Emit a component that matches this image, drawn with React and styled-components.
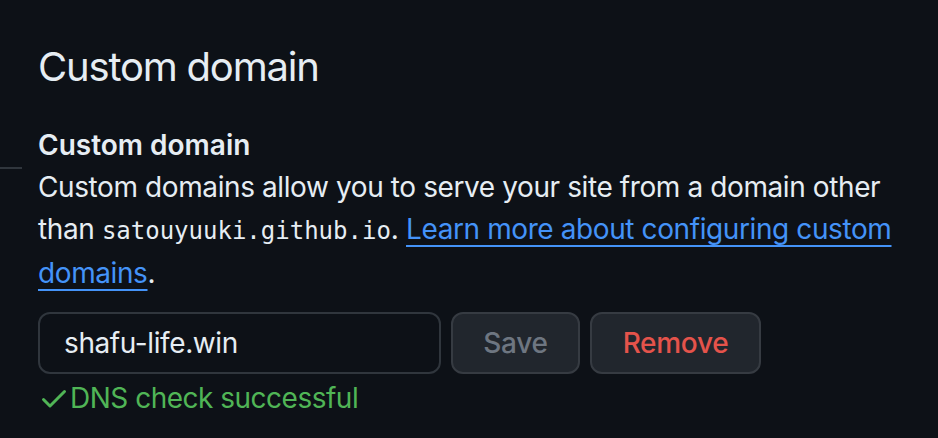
import React from 'react';
import styled, { createGlobalStyle } from 'styled-components';

const GlobalStyle = createGlobalStyle`
	html, body {
		margin: 0;
		padding: 0;
		background: #0d1117;
	}
	body {
		font-family: Inter, "Noto Sans", "Liberation Sans", sans-serif;
		color: #e6edf3;
	}
`;

const Page = styled.div`
	display: flex;
	width: 938px;
	height: 438px;
	background: #0d1117;
	overflow: hidden;
`;

const Sidebar = styled.aside`
	width: 22px;
	flex-shrink: 0;
	padding-top: 167px;
`;

const SideRule = styled.div`
	height: 2px;
	background: #30363d;
`;

const Main = styled.main`
	flex: 1;
	padding: 37px 0 0 16px;
`;

const Heading = styled.h2`
	margin: 0 0 27px;
	font-size: 40px;
	font-weight: 400;
	line-height: 60px;
	letter-spacing: -1.2px;
`;

const Label = styled.h3`
	margin: 0;
	font-size: 28px;
	font-weight: 600;
	line-height: 42px;
`;

const Description = styled.p`
	margin: 0;
	width: 880px;
	font-size: 28px;
	line-height: 42px;
	letter-spacing: -0.4px;
`;

const Code = styled.code`
	font-family: "DejaVu Sans Mono", "Liberation Mono", monospace;
	font-size: 24px;
	letter-spacing: 0;
`;

const Link = styled.a`
	color: #4493f8;
	text-decoration: underline;
	text-decoration-thickness: 2px;
	text-underline-offset: 6px;
`;

const Form = styled.div`
	display: flex;
	gap: 10px;
	margin-top: 18px;
`;

const Input = styled.input`
	box-sizing: border-box;
	width: 403px;
	height: 62px;
	padding: 0 24px;
	background: #0d1117;
	border: 2px solid #30363d;
	border-radius: 12px;
	color: #e6edf3;
	font-family: inherit;
	font-size: 28px;
	letter-spacing: -0.4px;
	outline: none;
`;

const Button = styled.button`
	box-sizing: border-box;
	width: ${(p) => p.$width}px;
	height: 62px;
	padding: 0;
	background: #21262d;
	border: 2px solid #363b42;
	border-radius: 12px;
	color: ${(p) => p.$color};
	font-family: inherit;
	font-size: 28px;
	font-weight: 500;
	letter-spacing: -0.3px;
`;

const Status = styled.div`
	display: flex;
	align-items: center;
	margin-top: 3px;
	color: #50b556;
	font-size: 28px;
	line-height: 42px;
	letter-spacing: -0.5px;
`;

const CheckIcon = () => (
	<svg width="32" height="32" viewBox="0 0 16 16" fill="currentColor">
		<path d="M13.78 4.22a.75.75 0 0 1 0 1.06l-7.25 7.25a.75.75 0 0 1-1.06 0L2.22 9.28a.751.751 0 0 1 .018-1.042.751.751 0 0 1 1.042-.018L6 10.94l6.72-6.72a.75.75 0 0 1 1.06 0Z" />
	</svg>
);

export default function App() {
	return (
		<>
			<GlobalStyle />
			<Page>
				<Sidebar>
					<SideRule />
				</Sidebar>
				<Main>
					<Heading>Custom domain</Heading>
					<Label>Custom domain</Label>
					<Description>
						Custom domains allow you to serve your site from a domain other than{' '}
						<Code>satouyuuki.github.io</Code>.{' '}
						<Link href="#">Learn more about configuring custom domains</Link>.
					</Description>
					<Form>
						<Input defaultValue="shafu-life.win" />
						<Button $width={129} $color="#6e7681">Save</Button>
						<Button $width={171} $color="#e5534b">Remove</Button>
					</Form>
					<Status>
						<CheckIcon />
						DNS check successful
					</Status>
				</Main>
			</Page>
		</>
	);
}
